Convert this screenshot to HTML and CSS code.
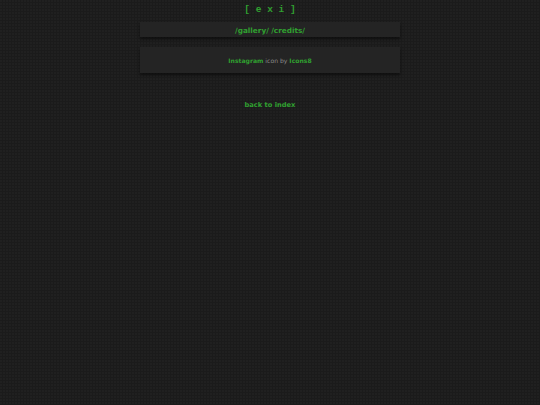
FILE: index.html
```html
<!DOCTYPE html>
<html>
<head>
<meta charset="utf-8">
<link rel="stylesheet" href="styles.css">
</head>
<body>
<div class="page">
  <div class="logo">[ e x i ]</div>
  <div class="card nav"><a href="#">/gallery/</a> <a href="#">/credits/</a></div>
  <div class="card credits"><a href="#">Instagram</a> icon by <a href="#">Icons8</a></div>
  <div class="back"><a href="#">back to index</a></div>
</div>
</body>
</html>
```

FILE: styles.css
```css
html, body {
  margin: 0;
  padding: 0;
}
body {
  background-color: #1b1b1b;
  background-image: radial-gradient(circle at 1px 1px, #202020 0.8px, transparent 1.2px);
  background-size: 3px 3px;
  min-height: 405px;
  font-family: "DejaVu Sans", Verdana, sans-serif;
}
a {
  color: #30a030;
  text-decoration: none;
  font-weight: bold;
}
.page {
  width: 260px;
  margin: 0 auto;
  display: flex;
  flex-direction: column;
  align-items: stretch;
}
.logo {
  font-family: "Liberation Mono", "DejaVu Sans Mono", monospace;
  font-weight: bold;
  color: #30a030;
  font-size: 9.5px;
  text-align: center;
  height: 22px;
  line-height: 19px;
  white-space: pre;
}
.card {
  background-color: #242424;
  box-shadow: 0 2px 3px rgba(0,0,0,0.5);
  text-align: center;
}
.nav {
  height: 15px;
  line-height: 17px;
  font-size: 7.3px;
}
.credits {
  margin-top: 10px;
  height: 26px;
  line-height: 28px;
  font-size: 6.1px;
  color: #8a8a8a;
}
.back {
  text-align: center;
  margin-top: 27px;
  font-size: 6.7px;
  line-height: 10px;
}
```
